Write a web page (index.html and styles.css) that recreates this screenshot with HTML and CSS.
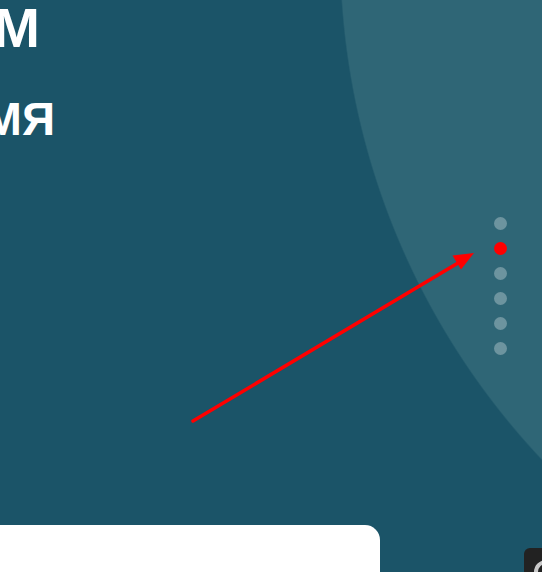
FILE: index.html
```html
<!DOCTYPE html>
<html lang="ru">
<head>
<meta charset="utf-8">
<title>Hero</title>
<link rel="stylesheet" href="styles.css">
</head>
<body>
<section class="hero">
  <h1 class="hero-title">
    <span class="title-line title-line--first"><span>Экономим</span></span>
    <span class="title-line title-line--second"><span>ВАШЕ ВРЕМЯ</span></span>
  </h1>
  <div class="hero-card"></div>

  <ul class="pager">
    <li class="pager-dot"></li>
    <li class="pager-dot pager-dot--active"></li>
    <li class="pager-dot"></li>
    <li class="pager-dot"></li>
    <li class="pager-dot"></li>
    <li class="pager-dot"></li>
  </ul>

  <svg class="annotation" width="542" height="572" viewBox="0 0 542 572" aria-hidden="true">
    <line x1="193" y1="421" x2="458" y2="263" stroke="#ff0000" stroke-width="3.5" stroke-linecap="round"/>
    <polygon points="474,253 461,269.5 452.5,255.5" fill="#ff0000"/>
  </svg>

  <button class="widget" type="button" aria-label="Помощь">
    <svg width="40" height="40" viewBox="0 0 40 40" aria-hidden="true">
      <circle cx="22" cy="24" r="10" fill="none" stroke="#c9c9c9" stroke-width="4"/>
    </svg>
  </button>
</section>
</body>
</html>
```

FILE: styles.css
```css
html, body {
  margin: 0;
  padding: 0;
}

body {
  width: 542px;
  height: 572px;
  overflow: hidden;
  font-family: "Liberation Sans", Arial, sans-serif;
  background: #1b5468;
}

.hero {
  position: relative;
  height: 572px;
  overflow: hidden;
  display: flex;
  flex-direction: column;
  background:
    radial-gradient(circle 740px at 1080px -48px, #2f6676 739px, rgba(47, 102, 118, 0) 740.5px),
    #1b5468;
}

.hero-title {
  margin: 0;
  color: #ffffff;
  font-weight: 700;
  display: flex;
  flex-direction: column;
}

.title-line {
  display: flex;
  justify-content: flex-end;
  white-space: nowrap;
}

.title-line--first {
  width: 40px;
  font-size: 56px;
  line-height: 56px;
  text-transform: uppercase;
}

.title-line--second {
  width: 55px;
  margin-top: 40px;
  font-size: 46px;
  line-height: 46px;
}

.hero-card {
  margin-top: auto;
  width: 380px;
  height: 47px;
  flex-shrink: 0;
  background: #ffffff;
  border-radius: 0 15px 0 0;
}

.pager {
  position: absolute;
  top: 217px;
  left: 494px;
  margin: 0;
  padding: 0;
  list-style: none;
  display: flex;
  flex-direction: column;
  gap: 12px;
}

.pager-dot {
  width: 13px;
  height: 13px;
  border-radius: 50%;
  background: rgba(255, 255, 255, 0.3);
}

.pager-dot--active {
  background: #ff0000;
}

.annotation {
  position: absolute;
  top: 0;
  left: 0;
  pointer-events: none;
}

.widget {
  position: absolute;
  left: 524px;
  top: 548px;
  width: 40px;
  height: 40px;
  padding: 0;
  border: 0;
  border-radius: 6px;
  background: #222222;
  overflow: hidden;
}

.widget svg {
  display: block;
}
```
